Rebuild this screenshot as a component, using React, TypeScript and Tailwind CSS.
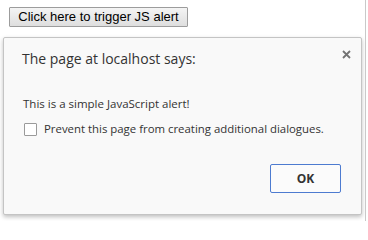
import React from 'react';

const App: React.FC = () => {
  return (
    <div className="relative w-[368px] h-[221px] overflow-hidden bg-white">
      <div className="absolute right-[2px] top-0 h-full w-px bg-[#c9c9c9]" />
      <div className="flex pl-[9px] pt-[7px]">
        <button className="h-[20px] w-[179px] rounded-[1px] border border-[#9c9c9c] bg-gradient-to-b from-[#f4f4f4] to-[#dedede] font-['Liberation_Sans',Arial,sans-serif] text-[13px] leading-[18px] text-black">
          Click here to trigger JS alert
        </button>
      </div>

      {/* Alert dialog */}
      <div className="ml-[3px] mt-[10px] h-[178px] w-[359px] rounded-[2px] border border-[#c4c4c4] bg-[#f9f9f9] shadow-[0_2px_4px_rgba(0,0,0,0.25)] font-['Open_Sans',sans-serif]">
        <div className="flex items-start justify-between pl-[18px] pr-[10px] pt-[11px]">
          <h1 className="text-[14px] leading-[20px] text-[#333]">The page at localhost says:</h1>
          <svg className="mt-[1px]" width="9" height="9" viewBox="0 0 9 9">
            <path d="M1 1 L8 8 M8 1 L1 8" stroke="#737373" strokeWidth="1.8" />
          </svg>
        </div>
        <p className="mt-[27px] pl-[19px] text-[11.5px] leading-[16px] text-[#333]">This is a simple JavaScript alert!</p>
        <label className="mt-[9px] flex items-center gap-[7px] pl-[20px] text-[11.4px] leading-[16px] text-[#333]">
          <span className="h-[13px] w-[13px] rounded-[1px] border border-[#9a9a9a] bg-white" />
          Prevent this page from creating additional dialogues.
        </label>
        <div className="flex justify-end pr-[20px] pt-[27px]">
          <button className="h-[29px] w-[71px] rounded-[2px] border border-[#4d7bd0] bg-[#fbfbfb] text-[12px] font-bold text-[#333]">
            OK
          </button>
        </div>
      </div>
    </div>
  );
};

export default App;
